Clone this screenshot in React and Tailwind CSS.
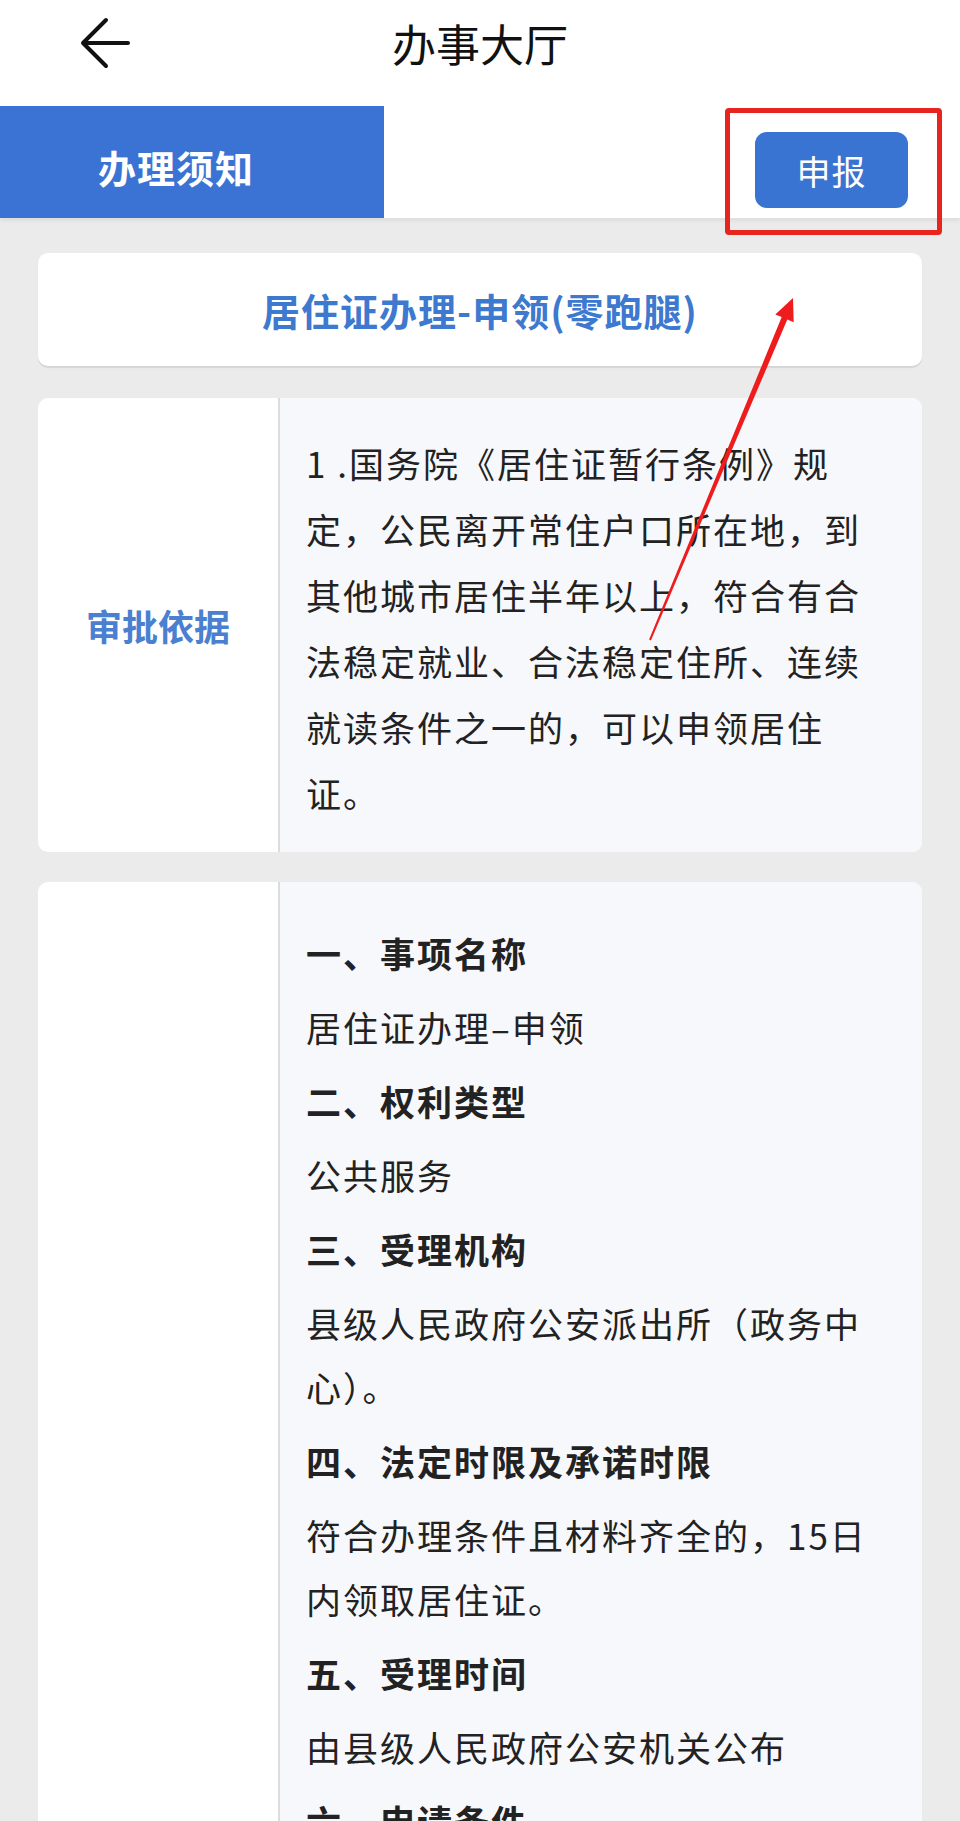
import React from 'react';

const basis = [
  '1 .国务院《居住证暂行条例》规',
  '定，公民离开常住户口所在地，到',
  '其他城市居住半年以上，符合有合',
  '法稳定就业、合法稳定住所、连续',
  '就读条件之一的，可以申领居住',
  '证。',
];

const sections = [
  { title: '一、事项名称', lines: ['居住证办理–申领'] },
  { title: '二、权利类型', lines: ['公共服务'] },
  { title: '三、受理机构', lines: ['县级人民政府公安派出所（政务中', '心）。'] },
  { title: '四、法定时限及承诺时限', lines: ['符合办理条件且材料齐全的，15日', '内领取居住证。'] },
  { title: '五、受理时间', lines: ['由县级人民政府公安机关公布'] },
  { title: '六、申请条件', lines: [] },
];

const App = () => {
  return (
    <div className="relative w-[960px] h-[1821px] overflow-hidden bg-[#ebebeb] font-['Noto_Sans_CJK_SC','Noto_Sans',sans-serif] text-[#222]">

      {/* Top bar */}
      <div className="bg-white">
        <div className="grid grid-cols-[1fr_auto_1fr] items-center h-[86px]">
          <div className="pl-[79px] flex items-center">
            <svg width="52" height="52" viewBox="0 0 52 52" fill="none" stroke="#111" strokeWidth="4" strokeLinecap="round" strokeLinejoin="round">
              <path d="M27 3 L4 26 L27 49 M4 26 H49" />
            </svg>
          </div>
          <h1 className="text-[44px] font-normal leading-none text-[#111]">办事大厅</h1>
          <div />
        </div>

        {/* Tabs row */}
        <div className="mt-[20px] flex h-[112px] shadow-[0_3px_4px_rgba(0,0,0,0.06)]">
          <div className="w-[384px] bg-[#3a73d4] flex items-center pl-[98px] pt-[8px] text-white text-[38px] font-bold tracking-[1px]">
            办理须知
          </div>
          <button className="ml-auto mr-[52px] mt-[26px] w-[153px] h-[76px] rounded-[12px] bg-[#3a74d3] text-white text-[34px] tracking-[1px] flex items-center justify-center">
            申报
          </button>
        </div>
      </div>

      {/* Content */}
      <div className="px-[38px] pt-[35px] flex flex-col">

        {/* Title card */}
        <div className="h-[113px] bg-white rounded-[10px] shadow-[0_2px_1px_rgba(0,0,0,0.09)] flex items-center justify-center">
          <span className="text-[38px] font-bold text-[#3d79cf] tracking-[1px]">居住证办理-申领(零跑腿)</span>
        </div>

        {/* Basis card */}
        <div className="mt-[32px] flex rounded-[10px] overflow-hidden bg-white">
          <div className="w-[242px] flex items-center justify-center border-r-2 border-[#dcdcdc]">
            <span className="text-[36px] font-bold text-[#4a80cf]">审批依据</span>
          </div>
          <div className="flex-1 bg-[#f7f8fc] pl-[26px] pt-[32px] pb-[26px] text-[35px] tracking-[2px] leading-[66px]">
            {basis.map((l) => (
              <div key={l} className="whitespace-nowrap">{l}</div>
            ))}
          </div>
        </div>

        {/* Detail card */}
        <div className="mt-[30px] flex rounded-t-[10px] overflow-hidden bg-white">
          <div className="w-[242px] border-r-2 border-[#dcdcdc]" />
          <div className="flex-1 bg-[#f7f8fc] pl-[26px] pt-[39px] flex flex-col gap-[10px] text-[35px] tracking-[2px] leading-[64px]">
            {sections.map((s) => (
              <React.Fragment key={s.title}>
                <div className="font-bold whitespace-nowrap">{s.title}</div>
                {s.lines.length > 0 && (
                  <div>
                    {s.lines.map((l) => (
                      <div key={l} className="whitespace-nowrap">{l}</div>
                    ))}
                  </div>
                )}
              </React.Fragment>
            ))}
          </div>
        </div>
      </div>

      {/* Annotation: red box around 申报 */}
      <div className="absolute left-[725px] top-[108px] w-[217px] h-[127px] border-[5px] border-[#e8241f] rounded-[4px]" />

      {/* Annotation: red arrow */}
      <svg className="absolute left-0 top-0 pointer-events-none" width="960" height="700" viewBox="0 0 960 700">
        <polygon points="793,298 793.7,322.2 787.3,319.5 650.9,640.4 649.1,639.6 781.7,317.1 775.3,314.4" fill="#ee1c1c" />
      </svg>
    </div>
  );
};

export default App;
